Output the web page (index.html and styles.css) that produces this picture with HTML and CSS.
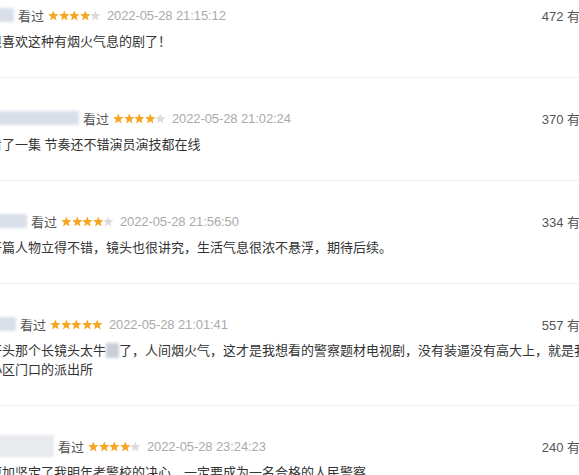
FILE: index.html
```html
<!DOCTYPE html>
<html lang="zh">
<head>
<meta charset="utf-8">
<link rel="stylesheet" href="styles.css">
</head>
<body>
<svg width="0" height="0" class="defs">
  <defs>
    <symbol id="star" viewBox="0 0 10 10">
      <path d="M5 0.3 L6.3 3.7 L9.9 3.8 L7.1 6.1 L8.1 9.7 L5 7.6 L1.9 9.7 L2.9 6.1 L0.1 3.8 L3.7 3.7 Z"/>
    </symbol>
  </defs>
</svg>
<div class="list">
  <div class="item">
    <div class="head">
      <span class="user u1"></span>
      <span class="seen">看过</span>
      <span class="stars">
        <svg class="s on"><use href="#star"/></svg><svg class="s on"><use href="#star"/></svg><svg class="s on"><use href="#star"/></svg><svg class="s on"><use href="#star"/></svg><svg class="s off"><use href="#star"/></svg>
      </span>
      <span class="date">2022-05-28 21:15:12</span>
      <span class="votes">472 有用</span>
    </div>
    <p class="text">很喜欢这种有烟火气息的剧了！</p>
  </div>
  <div class="item">
    <div class="head">
      <span class="user u2"></span>
      <span class="seen">看过</span>
      <span class="stars">
        <svg class="s on"><use href="#star"/></svg><svg class="s on"><use href="#star"/></svg><svg class="s on"><use href="#star"/></svg><svg class="s on"><use href="#star"/></svg><svg class="s off"><use href="#star"/></svg>
      </span>
      <span class="date">2022-05-28 21:02:24</span>
      <span class="votes">370 有用</span>
    </div>
    <p class="text">看了一集 节奏还不错演员演技都在线</p>
  </div>
  <div class="item">
    <div class="head">
      <span class="user u3"></span>
      <span class="seen">看过</span>
      <span class="stars">
        <svg class="s on"><use href="#star"/></svg><svg class="s on"><use href="#star"/></svg><svg class="s on"><use href="#star"/></svg><svg class="s on"><use href="#star"/></svg><svg class="s off"><use href="#star"/></svg>
      </span>
      <span class="date">2022-05-28 21:56:50</span>
      <span class="votes">334 有用</span>
    </div>
    <p class="text">开篇人物立得不错，镜头也很讲究，生活气息很浓不悬浮，期待后续。</p>
  </div>
  <div class="item">
    <div class="head">
      <span class="user u4"></span>
      <span class="seen">看过</span>
      <span class="stars">
        <svg class="s on"><use href="#star"/></svg><svg class="s on"><use href="#star"/></svg><svg class="s on"><use href="#star"/></svg><svg class="s on"><use href="#star"/></svg><svg class="s on"><use href="#star"/></svg>
      </span>
      <span class="date">2022-05-28 21:01:41</span>
      <span class="votes">557 有用</span>
    </div>
    <p class="text">开头那个长镜头太牛<span class="mask">逼</span>了，人间烟火气，这才是我想看的警察题材电视剧，没有装逼没有高大上，就是我家<br>小区门口的派出所</p>
  </div>
  <div class="item">
    <div class="head">
      <span class="user u5"></span>
      <span class="seen">看过</span>
      <span class="stars">
        <svg class="s on"><use href="#star"/></svg><svg class="s on"><use href="#star"/></svg><svg class="s on"><use href="#star"/></svg><svg class="s on"><use href="#star"/></svg><svg class="s off"><use href="#star"/></svg>
      </span>
      <span class="date">2022-05-28 23:24:23</span>
      <span class="votes">240 有用</span>
    </div>
    <p class="text">更加坚定了我明年考警校的决心，一定要成为一名合格的人民警察</p>
  </div>
</div>
</body>
</html>
```

FILE: styles.css
```css
html, body {
  margin: 0;
  padding: 0;
  background: #fff;
  overflow: hidden;
  width: 579px;
  height: 475px;
}
.defs {
  position: absolute;
  width: 0;
  height: 0;
}
.list {
  margin-left: -11px;
  margin-right: -14px;
  font-family: "Liberation Sans", Arial, "Noto Sans CJK SC", sans-serif;
  font-size: 13px;
}
.item {
  padding: 30px 0 26px;
  border-bottom: 1px solid #eef0f2;
}
.item:first-child {
  padding-top: 5px;
  padding-bottom: 26px;
}
.head {
  display: flex;
  align-items: center;
  height: 20px;
  white-space: nowrap;
}
.user {
  display: block;
  height: 14px;
  margin-right: 4px;
  background: #d9dfe8;
  filter: blur(1.5px);
}
.u1 { width: 25px; }
.u2 { width: 90px; }
.u3 { width: 38px; }
.u4 { width: 27px; }
.u5 { width: 65px; height: 22px; background: #e8eaee; }
.seen {
  color: #555;
  margin-right: 4px;
}
.stars {
  display: flex;
  margin-right: 6px;
}
.s {
  width: 10.6px;
  height: 11px;
}
.s.on { fill: #f5a623; }
.s.off { fill: #dcdcdc; }
.date {
  color: #aaa;
  letter-spacing: -0.1px;
}
.votes {
  margin-left: auto;
  color: #555;
}
.text {
  margin: 7px 0 0;
  line-height: 19px;
  color: #333;
  white-space: nowrap;
}
.mask {
  color: transparent;
  background: #c9ced6;
  filter: blur(1.5px);
}
```
